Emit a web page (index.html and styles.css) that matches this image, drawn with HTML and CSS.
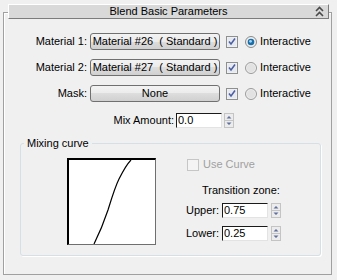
FILE: index.html
```html
<!DOCTYPE html>
<html>
<head>
    <meta http-equiv="Content-Type" content="text/html; charset=utf-8" />
    <title>Blend Basic Parameters</title>
    <link rel="stylesheet" href="styles.css">
</head>
<body>
<div class="rollout">
    <div class="rollout-title">
        <span class="title-text">Blend Basic Parameters</span>
        <svg class="collapse-icon" width="9" height="11" viewBox="0 0 9 11">
            <path d="M1 5 L4.5 1.5 L8 5 M1 10 L4.5 6.5 L8 10" fill="none" stroke="#4a4a4a" stroke-width="1.6"/>
        </svg>
    </div>

    <div class="row">
        <span class="row-label">Material 1:</span>
        <button class="map-btn">Material #26  ( Standard )</button>
        <svg class="check" width="12" height="12" viewBox="0 0 12 12">
            <rect x="0.5" y="0.5" width="11" height="11" fill="#f4f4f4" stroke="#8e8f8f"/>
            <rect x="1.5" y="1.5" width="9" height="9" fill="#e6e9ef"/>
            <path d="M3 5.5 L5 8 L9 2.5" fill="none" stroke="#4b5ea3" stroke-width="1.5"/>
        </svg>
        <svg class="radio" width="12" height="12" viewBox="0 0 12 12">
            <circle cx="6" cy="6" r="5.5" fill="#eeeeee" stroke="#8a8a8a"/>
            <circle cx="6" cy="6" r="3.3" fill="#1b6ea8"/>
            <circle cx="5.5" cy="5.3" r="1.4" fill="#9fd6f6"/>
        </svg>
        <span class="radio-label">Interactive</span>
    </div>

    <div class="row">
        <span class="row-label">Material 2:</span>
        <button class="map-btn">Material #27  ( Standard )</button>
        <svg class="check" width="12" height="12" viewBox="0 0 12 12">
            <rect x="0.5" y="0.5" width="11" height="11" fill="#f4f4f4" stroke="#8e8f8f"/>
            <rect x="1.5" y="1.5" width="9" height="9" fill="#e6e9ef"/>
            <path d="M3 5.5 L5 8 L9 2.5" fill="none" stroke="#4b5ea3" stroke-width="1.5"/>
        </svg>
        <svg class="radio" width="12" height="12" viewBox="0 0 12 12">
            <circle cx="6" cy="6" r="5.5" fill="#eeeeee" stroke="#9a9a9a"/>
            <circle cx="6" cy="6" r="4" fill="#e2e2e2"/>
        </svg>
        <span class="radio-label">Interactive</span>
    </div>

    <div class="row">
        <span class="row-label">Mask:</span>
        <button class="map-btn">None</button>
        <svg class="check" width="12" height="12" viewBox="0 0 12 12">
            <rect x="0.5" y="0.5" width="11" height="11" fill="#f4f4f4" stroke="#8e8f8f"/>
            <rect x="1.5" y="1.5" width="9" height="9" fill="#e6e9ef"/>
            <path d="M3 5.5 L5 8 L9 2.5" fill="none" stroke="#4b5ea3" stroke-width="1.5"/>
        </svg>
        <svg class="radio" width="12" height="12" viewBox="0 0 12 12">
            <circle cx="6" cy="6" r="5.5" fill="#eeeeee" stroke="#9a9a9a"/>
            <circle cx="6" cy="6" r="4" fill="#e2e2e2"/>
        </svg>
        <span class="radio-label">Interactive</span>
    </div>

    <div class="mix-row">
        <span class="mix-label">Mix Amount:</span>
        <div class="num-field">0.0</div>
        <svg class="spinner" width="10" height="15" viewBox="0 0 10 15">
            <rect x="0.5" y="0.5" width="9" height="14" fill="#ececec" stroke="#c4c4c4"/>
            <line x1="1" y1="7.5" x2="9" y2="7.5" stroke="#c4c4c4"/>
            <path d="M2.5 5.5 L5 3 L7.5 5.5 Z M2.5 9.5 L5 12 L7.5 9.5 Z" fill="#5f6f9e"/>
        </svg>
    </div>

    <fieldset class="curve-group">
        <legend>Mixing curve</legend>
        <div class="curve-box">
            <svg width="86" height="84" viewBox="0 0 86 84">
                <path d="M25 84 C30 74 35 62 39 50 C43 37 46 27 50 19 C54 11 57 5 62 0" fill="none" stroke="#000" stroke-width="1.2"/>
            </svg>
        </div>
        <div class="curve-side">
            <div class="use-curve">
                <svg width="12" height="12" viewBox="0 0 12 12">
                    <rect x="0.5" y="0.5" width="11" height="11" fill="#f4f4f4" stroke="#c6c6c6"/>
                </svg>
                <span>Use Curve</span>
            </div>
            <div class="zone-title">Transition zone:</div>
            <div class="zone-row first">
                <span class="zone-label">Upper:</span>
                <div class="num-field">0.75</div>
                <svg class="spinner" width="10" height="15" viewBox="0 0 10 15">
                    <rect x="0.5" y="0.5" width="9" height="14" fill="#ececec" stroke="#c4c4c4"/>
                    <line x1="1" y1="7.5" x2="9" y2="7.5" stroke="#c4c4c4"/>
                    <path d="M2.5 5.5 L5 3 L7.5 5.5 Z M2.5 9.5 L5 12 L7.5 9.5 Z" fill="#5f6f9e"/>
                </svg>
            </div>
            <div class="zone-row">
                <span class="zone-label">Lower:</span>
                <div class="num-field">0.25</div>
                <svg class="spinner" width="10" height="15" viewBox="0 0 10 15">
                    <rect x="0.5" y="0.5" width="9" height="14" fill="#ececec" stroke="#c4c4c4"/>
                    <line x1="1" y1="7.5" x2="9" y2="7.5" stroke="#c4c4c4"/>
                    <path d="M2.5 5.5 L5 3 L7.5 5.5 Z M2.5 9.5 L5 12 L7.5 9.5 Z" fill="#5f6f9e"/>
                </svg>
            </div>
        </div>
    </fieldset>
</div>
</body>
</html>
```

FILE: styles.css
```css
html {
    background: #f0f0f0;
}

body {
    margin: 0;
    color: #000;
    font-family: "Liberation Sans", Arial, sans-serif;
    font-size: 11px;
    line-height: 13px;
}

* {
    box-sizing: border-box;
}

svg {
    display: block;
    flex: none;
}

.rollout {
    margin: 12px 0 0 3px;
    width: 329px;
    height: 263px;
    border: 1px solid #a0a0a0;
    box-shadow: inset 1px 1px 0 #fff;
}

.rollout-title {
    display: grid;
    grid-template-columns: 20px 1fr 20px;
    align-items: center;
    height: 15px;
    margin: -9px 2px 0 4px;
    background: #d9d9d9;
    border-style: solid;
    border-width: 1px;
    border-color: #fff #7c7c7c #7c7c7c #fff;
}

.title-text {
    grid-column: 2;
    text-align: center;
}

.collapse-icon {
    grid-column: 3;
    justify-self: end;
    margin-right: 4px;
}

.row {
    display: flex;
    align-items: center;
    height: 17px;
    margin-top: 9px;
}

.rollout-title + .row {
    margin-top: 14px;
}

.row-label {
    width: 83px;
    text-align: right;
}

.map-btn {
    width: 130px;
    height: 17px;
    margin: 0 0 0 3px;
    padding: 0;
    font: inherit;
    color: #000;
    white-space: pre;
    border: 1px solid #707070;
    border-radius: 3px;
    background: linear-gradient(#f3f3f3, #ebebeb 50%, #dddddd 50%, #d0d0d0);
}

.check {
    margin-left: 6px;
}

.radio {
    margin-left: 7px;
}

.radio-label {
    margin-left: 3px;
}

.mix-row {
    display: flex;
    align-items: center;
    height: 15px;
    margin-top: 11px;
}

.mix-label {
    width: 170px;
    text-align: right;
}

.num-field {
    width: 46px;
    height: 15px;
    margin-left: 2px;
    padding-left: 1px;
    background: #fff;
    border-style: solid;
    border-width: 1px;
    border-color: #1a1a1a #e3e3e3 #e3e3e3 #1a1a1a;
}

.spinner {
    margin-left: 2px;
}

.curve-group {
    display: flex;
    width: 301px;
    margin: 9px 0 0 16px;
    padding: 8px 0 10px 0;
    border: 1px solid #d5dfe5;
    border-radius: 3px;
    box-shadow: 1px 1px 0 #fff;
}

.curve-group legend {
    margin-left: 3px;
    padding: 0 3px;
}

.curve-box {
    width: 89px;
    height: 87px;
    margin-left: 46px;
    background: #fff;
    border-style: solid;
    border-width: 2px 1px 1px 2px;
    border-color: #000 #6f6f6f #6f6f6f #000;
}

.curve-side {
    margin-left: 30px;
}

.use-curve {
    display: flex;
    align-items: center;
    height: 13px;
    margin-left: 1px;
    color: #a0a0a0;
}

.use-curve span {
    margin-left: 4px;
}

.zone-title {
    margin: 13px 0 0 16px;
}

.zone-row {
    display: flex;
    align-items: center;
    height: 15px;
    margin-top: 8px;
}

.zone-row.first {
    margin-top: 6px;
}

.zone-label {
    width: 34px;
}

.zone-row .spinner {
    margin-left: 3px;
}
```
